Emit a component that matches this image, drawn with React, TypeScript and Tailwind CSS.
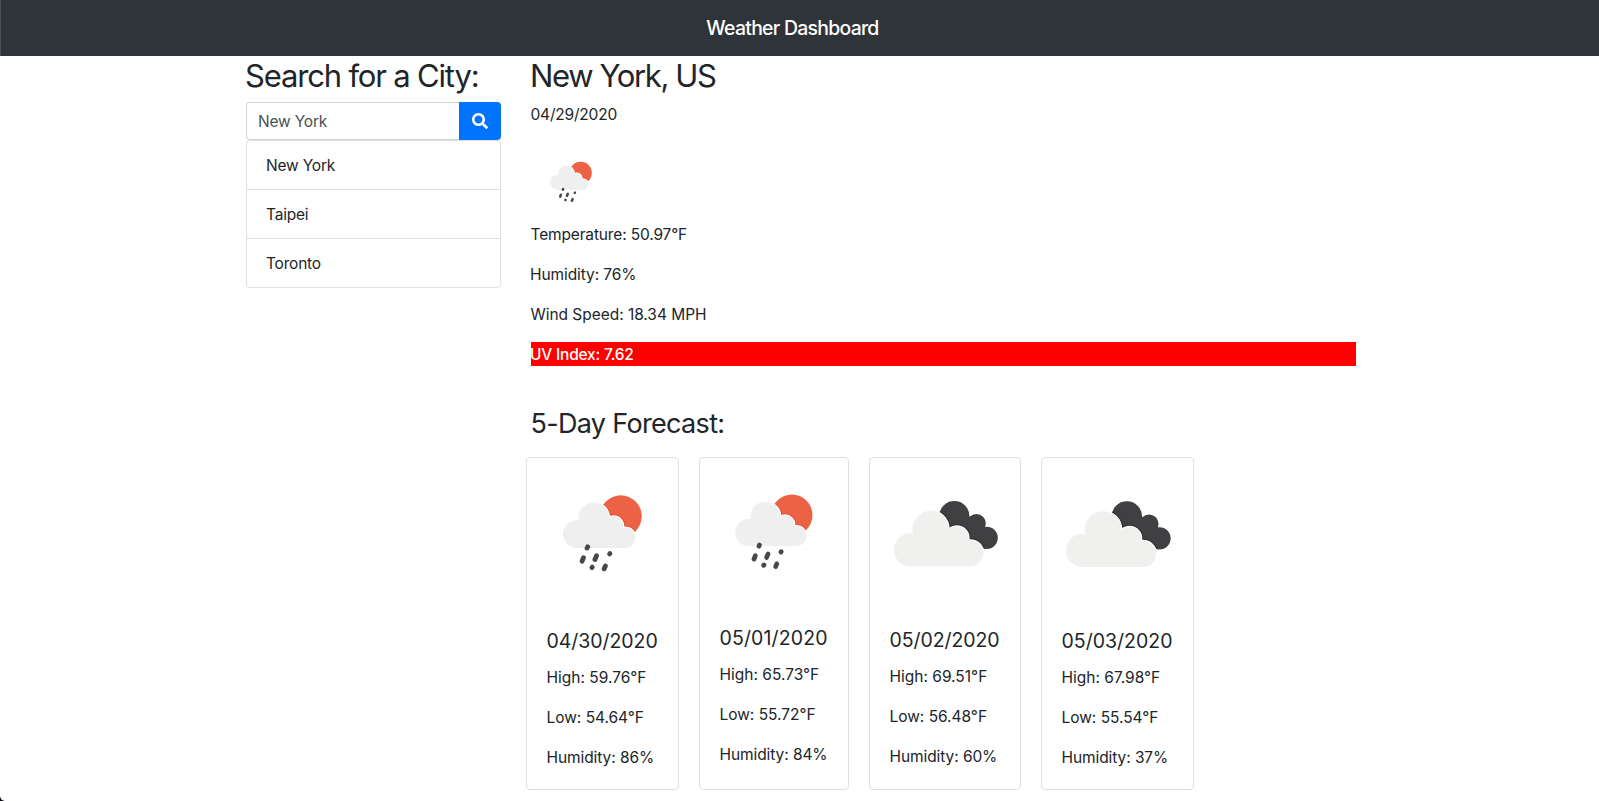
import type { ReactNode } from "react";
import { FaSearch } from "react-icons/fa";

type IconKind = "rain" | "clouds";

const rainCloud = (
  <>
    <circle cx="33" cy="50.4" r="9.2" />
    <circle cx="44.2" cy="39.7" r="10.2" />
    <circle cx="57.4" cy="45" r="6.4" />
    <circle cx="65.1" cy="52.8" r="6.8" />
    <path d="M33 45H60L65.1 52V59.6H33Z" />
  </>
);

const brokenCloud = (
  <>
    <circle cx="26.9" cy="61.2" r="11" />
    <circle cx="40.4" cy="47.3" r="12.1" />
    <circle cx="58" cy="53.3" r="7.8" />
    <circle cx="66.9" cy="63.5" r="8.7" />
    <path d="M26.9 54H61L66.9 62V72.2H26.9Z" />
  </>
);

const darkCloud = (
  <>
    <circle cx="56.2" cy="38.8" r="10.1" />
    <circle cx="70.9" cy="43.7" r="6.3" />
    <circle cx="77.8" cy="53.2" r="7.4" />
    <path d="M56 36L65.6 39.5L70 38L77 46.5L78 53L75 60L55 56Z" />
  </>
);

function CloudLayer({ children, fill, edge, clip }: { children: ReactNode; fill: string; edge: string; clip: string }) {
  return (
    <>
      <g clipPath={`url(#${clip})`} stroke={edge} strokeWidth="2.6" fill="none">
        {children}
      </g>
      <g fill="#fff" stroke="#fff" strokeWidth="1.3">
        {children}
      </g>
      <g fill={fill}>{children}</g>
    </>
  );
}

function WeatherIcon({ kind, id, className }: { kind: IconKind; id: string; className: string }) {
  return (
    <svg viewBox="0 0 100 100" className={className} aria-hidden="true">
      {kind === "rain" ? (
        <>
          <clipPath id={id}>
            <circle cx="62.1" cy="38.6" r="13.9" />
          </clipPath>
          <circle cx="62.1" cy="38.6" r="13.9" fill="#eb6344" />
          <CloudLayer fill="#efefef" edge="#e4502e" clip={id}>{rainCloud}</CloudLayer>
          <g stroke="#484848" strokeWidth="3.2" strokeLinecap="round">
            <path d="M39.8 59.6L40.2 58.8" />
            <path d="M36.5 68.3L37.4 66" />
            <path d="M45 67.2L46 64.8" />
            <path d="M54.7 63.5L54.9 63.3" />
            <path d="M43 72.5L43.2 72.3" />
            <path d="M51.1 73.4L51.9 71.5" />
          </g>
        </>
      ) : (
        <>
          <clipPath id={id}>{darkCloud}</clipPath>
          <g fill="#404042">{darkCloud}</g>
          <CloudLayer fill="#f0f0ee" edge="#2c2c2e" clip={id}>{brokenCloud}</CloudLayer>
        </>
      )}
    </svg>
  );
}

const cities = [
  { name: "New York", tracking: "tracking-[-0.2px]" },
  { name: "Taipei", tracking: "tracking-[-0.2px]" },
  { name: "Toronto", tracking: "tracking-[-0.2px]" },
];

const forecast: {
  date: string;
  high: string;
  low: string;
  humidity: string;
  icon: IconKind;
  width: string;
  tracking: string;
}[] = [
  { date: "04/30/2020", high: "59.76", low: "54.64", humidity: "86", icon: "rain", width: "w-[153px]", tracking: "tracking-[-0.05px]" },
  { date: "05/01/2020", high: "65.73", low: "55.72", humidity: "84", icon: "rain", width: "w-[150px]", tracking: "tracking-[0.13px]" },
  { date: "05/02/2020", high: "69.51", low: "56.48", humidity: "60", icon: "clouds", width: "w-[152px]", tracking: "tracking-[-0.08px]" },
  { date: "05/03/2020", high: "67.98", low: "55.54", humidity: "37", icon: "clouds", width: "w-[153px]", tracking: "tracking-normal" },
];

export default function App() {
  return (
    <div className="relative h-[801px] overflow-hidden bg-white font-['Inter','Liberation_Sans',sans-serif] text-[15.5px] leading-6 text-[#212529]">
      <header className="flex h-14 items-center justify-center border-l border-[#4b5054] bg-[#2f3438] pr-[15px]">
        <h1 className="text-[19.4px] leading-[30px] font-medium tracking-[-0.72px] text-white">Weather Dashboard</h1>
      </header>

      <main className="ml-[246px] flex w-[1110px] gap-[30px]">
        <aside className="w-[255px] shrink-0">
          <h2 className="mb-[7px] pt-px text-[31px] leading-[38.4px] -indent-px tracking-[-1.17px] whitespace-nowrap">Search for a City:</h2>
          <form className="flex h-[38px]" onSubmit={(e) => e.preventDefault()}>
            <input
              defaultValue="New York"
              aria-label="City"
              className="w-[213px] rounded-l border border-r-0 border-[#ced4da] bg-white pt-[2px] pr-3 pl-[11px] tracking-[-0.2px] text-[#495057] outline-none"
            />
            <button aria-label="Search" className="flex w-[42px] items-center justify-center rounded-r bg-[#0073ff] pr-px text-base text-white">
              <FaSearch />
            </button>
          </form>
          <ul className="divide-y divide-[#dfdfdf] rounded border border-[#dfdfdf]">
            {cities.map((city) => (
              <li key={city.name} className={`pt-[13px] pr-5 pb-[11px] pl-[19px] ${city.tracking}`}>
                {city.name}
              </li>
            ))}
          </ul>
        </aside>

        <section className="w-[825px] shrink-0">
          <h2 className="mb-[7px] pt-px text-[31px] leading-[38.4px] -indent-px tracking-[-1.37px]">New York, US</h2>
          <p className="mb-[15px] pt-px -indent-[0.5px] tracking-[-0.2px]">04/29/2020</p>
          <WeatherIcon kind="rain" id="current-icon" className="size-20" />
          <p className="mb-[15px] pt-px -indent-[0.5px] tracking-[-0.15px]">Temperature: 50.97°F</p>
          <p className="mb-[15px] pt-px -indent-px tracking-[-0.08px]">Humidity: 76%</p>
          <p className="mb-[15px] pt-px -indent-[0.5px] tracking-[-0.04px]">Wind Speed: 18.34 MPH</p>
          <p className="mb-10 bg-[#ff0000] pt-[2px] leading-[22px] font-medium -indent-px tracking-[-0.2px] text-white">UV Index: 7.62</p>

          <h3 className="pt-px text-[27px] leading-[33.6px] -indent-[0.5px] tracking-[-0.68px]">5-Day Forecast:</h3>
          <div className="mt-4 -ml-[5px] flex gap-5">
            {forecast.map((day) => (
              <article key={day.date} className={`${day.width} h-[333px] shrink-0 rounded border border-[#dfdfdf] bg-white`}>
                <WeatherIcon kind={day.icon} id={`icon-${day.date.replaceAll("/", "-")}`} className="block aspect-square w-full" />
                <div className="p-5 whitespace-nowrap -indent-[0.5px]">
                  <h4 className={`mb-3 text-[19.5px] leading-6 ${day.tracking}`}>{day.date}</h4>
                  <p className="mb-[15px] pt-px">High: {day.high}°F</p>
                  <p className="mb-[15px] pt-px tracking-[-0.03px]">Low: {day.low}°F</p>
                  <p className="pt-px tracking-[-0.08px]">Humidity: {day.humidity}%</p>
                </div>
              </article>
            ))}
          </div>
        </section>
      </main>

      <svg viewBox="0 0 5 5" className="absolute bottom-0 left-0 size-[5px]" aria-hidden="true">
        <path d="M0 0Q0.5 4.5 5 5H0Z" fill="#0a0a14" />
      </svg>
    </div>
  );
}
